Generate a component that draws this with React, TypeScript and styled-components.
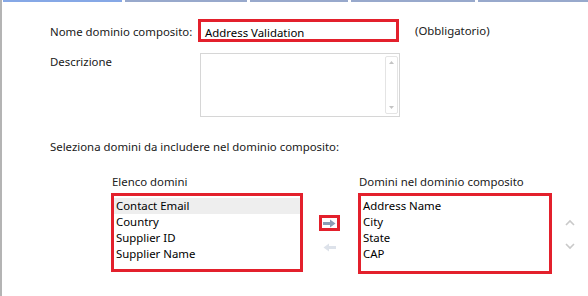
import styled, { createGlobalStyle } from "styled-components";

const GlobalStyle = createGlobalStyle`
  html, body {
    margin: 0;
    padding: 0;
    background: #ffffff;
  }
  body {
    font-family: "Noto Sans", "Open Sans", sans-serif;
    font-size: 11.4px;
    color: #1e1e1e;
  }
`;

const Frame = styled.div`
  width: 588px;
  height: 296px;
  box-sizing: border-box;
  border-left: 2px solid #b4b4b4;
  overflow: hidden;
  background: #fff;
  white-space: nowrap;
`;

const TabStrip = styled.div`
  display: flex;
  gap: 3px;
  height: 2px;
  padding-left: 1px;
`;

const TabEdge = styled.div<{ $w: number; $active?: boolean }>`
  width: ${(p) => p.$w}px;
  height: 2px;
  background: ${(p) => (p.$active ? "#86a8e6" : "#98a9cc")};
`;

const Form = styled.div`
  padding: 17px 0 0 48px;
`;

const FieldRow = styled.div`
  display: grid;
  grid-template-columns: 148px 201px auto;
  align-items: start;
`;

const Label = styled.div<{ $top?: number }>`
  padding-top: ${(p) => p.$top ?? 0}px;
  line-height: 16px;
  color: #202020;
`;

const Hint = styled.div`
  padding: 4px 0 0 16px;
  line-height: 16px;
  color: #202020;
`;

const RedBox = styled.div`
  box-sizing: border-box;
  border: 3px solid #e3202c;
  background: #fff;
`;

const NameInput = styled(RedBox)`
  height: 23px;
  padding: 3px 0 0 4px;
  line-height: 16px;
  color: #000;
`;

const TextArea = styled.div`
  margin: 11px 0 0 2px;
  width: 200px;
  height: 64px;
  box-sizing: border-box;
  border: 1px solid #d6d6d6;
  display: flex;
  justify-content: flex-end;
  padding: 2px 1px 2px 0;
`;

const ScrollTrack = styled.div`
  width: 13px;
  box-sizing: border-box;
  border: 1px solid #e4e4e4;
  border-radius: 2px;
  display: flex;
  flex-direction: column;
  justify-content: space-between;
  align-items: center;
  padding: 4px 0;
`;

const Intro = styled.div`
  margin-top: 22px;
  line-height: 16px;
  color: #202020;
`;

const Picker = styled.div`
  display: flex;
  align-items: flex-start;
  margin: 19px 0 0 61px;
`;

const ListColumn = styled.div<{ $w: number }>`
  width: ${(p) => p.$w}px;
  display: flex;
  flex-direction: column;
`;

const ListTitle = styled.div`
  line-height: 16px;
  padding-left: 1px;
  margin-bottom: 3px;
  color: #202020;
`;

const ListBox = styled(RedBox)<{ $h: number }>`
  height: ${(p) => p.$h}px;
  padding: 2px 0 0;
`;

const Item = styled.div<{ $selected?: boolean }>`
  line-height: 16px;
  padding-left: 2px;
  color: #000;
  background: ${(p) => (p.$selected ? "#eeeeee" : "transparent")};
`;

const Movers = styled.div`
  width: 55px;
  display: flex;
  flex-direction: column;
  align-items: flex-start;
  padding: 41px 0 0 16px;
  box-sizing: border-box;
  gap: 12px;
`;

const MoveButton = styled(RedBox)`
  width: 21px;
  height: 16px;
  display: flex;
  align-items: center;
  justify-content: center;
`;

const Ghost = styled.div`
  width: 21px;
  height: 10px;
  display: flex;
  justify-content: center;
`;

const Orderers = styled.div`
  display: flex;
  flex-direction: column;
  gap: 17px;
  padding: 45px 0 0 13px;
`;

const Arrow = ({ dir, color }: { dir: "left" | "right"; color: string }) => (
  <svg width="13" height="9" viewBox="0 0 13 9">
    <g transform={dir === "left" ? "translate(13,0) scale(-1,1)" : undefined}>
      <path d="M0 3h7V0.5L12.5 4.5 7 8.5V6H0z" fill={color} />
    </g>
  </svg>
);

const Chevron = ({ up }: { up?: boolean }) => (
  <svg width="10" height="7" viewBox="0 0 10 7">
    <path
      d={up ? "M1 6l4-4 4 4" : "M1 1l4 4 4-4"}
      fill="none"
      stroke="#c9c9c9"
      strokeWidth="1.6"
    />
  </svg>
);

const Tri = ({ up }: { up?: boolean }) => (
  <svg width="5" height="3" viewBox="0 0 5 3">
    <path d={up ? "M0 3L2.5 0 5 3z" : "M0 0L2.5 3 5 0z"} fill="#c4c4c4" />
  </svg>
);

const available = ["Contact Email", "Country", "Supplier ID", "Supplier Name"];
const chosen = ["Address Name", "City", "State", "CAP"];

export default function App() {
  return (
    <Frame>
      <GlobalStyle />
      <TabStrip>
        <TabEdge $w={119} $active />
        <TabEdge $w={123} />
        <TabEdge $w={98} />
        <TabEdge $w={125} />
        <TabEdge $w={110} />
      </TabStrip>
      <Form>
        <FieldRow>
          <Label $top={5}>Nome dominio composito:</Label>
          <NameInput>Address Validation</NameInput>
          <Hint>(Obbligatorio)</Hint>
        </FieldRow>
        <FieldRow>
          <Label $top={12}>Descrizione</Label>
          <TextArea>
            <ScrollTrack>
              <Tri up />
              <Tri />
            </ScrollTrack>
          </TextArea>
        </FieldRow>
        <Intro>Seleziona domini da includere nel dominio composito:</Intro>
        <Picker>
          <ListColumn $w={192}>
            <ListTitle>Elenco domini</ListTitle>
            <ListBox $h={79}>
              {available.map((d, i) => (
                <Item key={d} $selected={i === 0}>
                  {d}
                </Item>
              ))}
            </ListBox>
          </ListColumn>
          <Movers>
            <MoveButton>
              <Arrow dir="right" color="#8c9db5" />
            </MoveButton>
            <Ghost>
              <Arrow dir="left" color="#dde2ea" />
            </Ghost>
          </Movers>
          <ListColumn $w={194}>
            <ListTitle>Domini nel dominio composito</ListTitle>
            <ListBox $h={81}>
              {chosen.map((d) => (
                <Item key={d}>{d}</Item>
              ))}
            </ListBox>
          </ListColumn>
          <Orderers>
            <Chevron up />
            <Chevron />
          </Orderers>
        </Picker>
      </Form>
    </Frame>
  );
}
